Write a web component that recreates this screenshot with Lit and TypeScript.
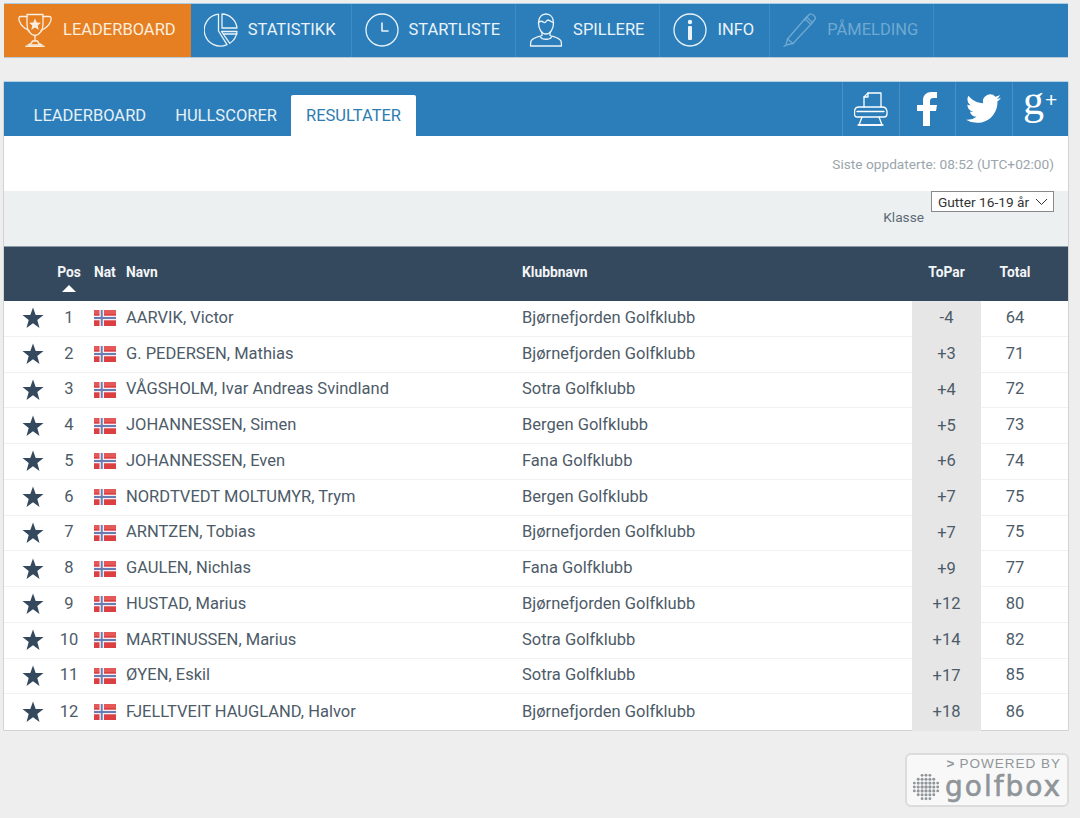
import { LitElement, html, css, svg } from "lit";
import { customElement } from "lit/decorators.js";

const ROWS: [number, string, string, string, number][] = [
  [1, "AARVIK, Victor", "Bjørnefjorden Golfklubb", "-4", 64],
  [2, "G. PEDERSEN, Mathias", "Bjørnefjorden Golfklubb", "+3", 71],
  [3, "VÅGSHOLM, Ivar Andreas Svindland", "Sotra Golfklubb", "+4", 72],
  [4, "JOHANNESSEN, Simen", "Bergen Golfklubb", "+5", 73],
  [5, "JOHANNESSEN, Even", "Fana Golfklubb", "+6", 74],
  [6, "NORDTVEDT MOLTUMYR, Trym", "Bergen Golfklubb", "+7", 75],
  [7, "ARNTZEN, Tobias", "Bjørnefjorden Golfklubb", "+7", 75],
  [8, "GAULEN, Nichlas", "Fana Golfklubb", "+9", 77],
  [9, "HUSTAD, Marius", "Bjørnefjorden Golfklubb", "+12", 80],
  [10, "MARTINUSSEN, Marius", "Sotra Golfklubb", "+14", 82],
  [11, "ØYEN, Eskil", "Sotra Golfklubb", "+17", 85],
  [12, "FJELLTVEIT HAUGLAND, Halvor", "Bjørnefjorden Golfklubb", "+18", 86],
];

const stroke = (body: unknown, w = 34, h = 34) => html`<svg class="ic" width=${w} height=${h} viewBox="0 0 ${w} ${h}" fill="none" stroke="currentColor" stroke-width="1.3" stroke-linejoin="round" stroke-linecap="round">${body}</svg>`;

const trophy = stroke(svg`
  <path d="M9 1.500H25V11C25 18 21.500 21.500 17 22.500C12.500 21.500 9 18 9 11Z"/>
  <path d="M9 3.500H2.500C0.500 3.500 0.500 6 1.500 8.500C3 12.500 6.500 15.500 11 17.500"/>
  <path d="M25 3.500H31.500C33.500 3.500 33.500 6 32.500 8.500C31 12.500 27.500 15.500 23 17.500"/>
  <path d="M17 22.500V28M14.500 28H19.500C20 30 22 31.500 24 32H10C12 31.500 14 30 14.500 28Z"/>
  <path d="M8 33.200H26" stroke-width="1.600"/>
  <path fill="currentColor" stroke="none" d="M17 5.500L18.700 9.400L22.900 9.800L19.700 12.600L20.700 16.700L17 14.500L13.300 16.700L14.300 12.600L11.100 9.800L15.300 9.400Z"/>
`);
const pie = stroke(svg`
  <path d="M14.500 1.200A16 16 0 1 0 23 31.600L14.500 18Z"/>
  <path d="M18 1A15.500 15.500 0 0 1 33 15H18Z"/>
  <path d="M17.500 18.500H33A16 16 0 0 1 25.800 30.300Z"/>
  <path d="M19.500 21L33 21"/>
`);
const clock = stroke(svg`<circle cx="17" cy="17" r="16"/><path d="M17 10V18H23" stroke-width="1.600"/>`);
const person = stroke(svg`
  <path d="M9.500 10C9.500 4.500 12.500 1 17 1C21.500 1 24.500 4.500 24.500 10C24.500 15.500 21.500 21 17 21C12.500 21 9.500 15.500 9.500 10Z"/>
  <path d="M9.500 10C11 7.500 13 8 15 9.500C16.500 10.500 17.500 7 19 7C21 7.500 23 9 24.500 10"/>
  <path d="M13 19.500V22.500C9 24 3 25 1.800 28.500L1.500 33H32.500L32.200 28.500C31 25 25 24 21 22.500V19.500"/>
  <path d="M11.500 24C13 27 21 27 22.500 24"/>
`);
const info = html`<svg class="ic" width="34" height="34" viewBox="0 0 34 34" fill="none" stroke="currentColor"><circle cx="17" cy="17" r="16" stroke-width="1.300"/><circle cx="17" cy="9" r="2.200" fill="currentColor" stroke="none"/><rect x="15" y="13" width="4" height="14" rx="1" fill="currentColor" stroke="none"/></svg>`;
const pen = stroke(svg`
  <path d="M2 32.500L1 33.500M3 32L4.500 26L23.500 4L29.500 9.500L10 30.500Z"/>
  <path d="M4.500 26L10 30.500M22 6L28 11.500M24 3.500L27 1C29 0.500 32.500 3.500 32.500 5.500L29.500 9.500M26 1.800L21 7.500"/>
`);
const printer = stroke(svg`
  <path d="M10 15V5L14 1H27V15"/><path d="M10 5H14V1"/>
  <path d="M5 15H28C31 15 33 17 33 20V22C33 24 31.500 25 30 25H3C1.500 25 0.500 24 0.500 22V20C0.500 17 2 15 5 15Z"/>
  <path d="M3 19.500H30"/><path d="M8 25L5 33H28L25 25"/><path d="M4 33H29"/>
`, 34, 34);
const fb = html`<svg class="ic" width="20" height="34" viewBox="0 0 20 34" fill="currentColor"><path d="M6 34V19H0V13H6V8.500C6 3 9.500 0 14.500 0H20V6H16.500C14 6 13 7 13 9V13H20L19 19H13V34Z"/></svg>`;
const tw = html`<svg class="ic" width="35" height="30" viewBox="0 0 24 20.500" fill="currentColor"><path d="M23.953 2.570a10 10 0 01-2.825.775 4.958 4.958 0 002.163-2.723c-.951.555-2.005.959-3.127 1.184a4.920 4.920 0 00-8.384 4.482C7.690 6.095 4.067 4.130 1.640 1.162a4.822 4.822 0 00-.666 2.475c0 1.710.870 3.213 2.188 4.096a4.904 4.904 0 01-2.228-.616v.060a4.923 4.923 0 003.946 4.827 4.996 4.996 0 01-2.212.085 4.936 4.936 0 004.604 3.417 9.867 9.867 0 01-6.102 2.105c-.390 0-.779-.023-1.170-.067a13.995 13.995 0 007.557 2.209c9.053 0 13.998-7.496 13.998-13.985 0-.210 0-.420-.015-.630A9.935 9.935 0 0024 2.590z"/></svg>`;

const star = html`<svg class="star" width="22" height="22" viewBox="0 0 22 22" fill="currentColor"><path d="M11 0.500L13.700 8H21.500L15.300 12.900L17.500 21L11 16.300L4.500 21L6.700 12.900L0.500 8H8.300Z"/></svg>`;
const flag = html`<svg class="flag" width="22" height="16" viewBox="0 0 22 16"><rect width="22" height="16" fill="#dc3f42"/><rect y="0" width="22" height="4" fill="#ea6a68" opacity=".6"/><rect x="5.500" width="4.500" height="16" fill="#f0eff4"/><rect y="5.700" width="22" height="4.600" fill="#f0eff4"/><rect x="6.800" width="1.900" height="16" fill="#6a7cb2"/><rect y="7" width="22" height="2" fill="#6a7cb2"/></svg>`;

const dots: { x: number; y: number; r: number }[] = [];
for (let i = -3; i <= 3; i++) for (let j = -3; j <= 3; j++) {
  const d = Math.hypot(i, j);
  if (d <= 3.5) dots.push({ x: 14 + i * 3.9, y: 14 + j * 3.9, r: 1.8 - d * 0.12 });
}
const globe = html`<svg class="globe" width="28" height="28" viewBox="0 0 28 28" fill="#8f9599">${dots.map((d) => svg`<circle cx=${d.x} cy=${d.y} r=${d.r}/>`)}</svg>`;

const NAV = [
  { t: "LEADERBOARD", i: trophy, c: "first" },
  { t: "STATISTIKK", i: pie, c: "" },
  { t: "STARTLISTE", i: clock, c: "" },
  { t: "SPILLERE", i: person, c: "" },
  { t: "INFO", i: info, c: "" },
  { t: "PÅMELDING", i: pen, c: "off" },
];

@customElement("app-root")
export class AppRoot extends LitElement {
  static styles = css`
    :host { display: block; min-height: 818px; background: #eeeeee; font-family: Roboto, "Liberation Sans", sans-serif; color: #4d5b68; box-sizing: border-box; padding: 3px 12px 0 4px; overflow: hidden; }
    * { box-sizing: border-box; }
    .ic { display: block; flex: none; }
    nav { display: flex; height: 55px; background: #2b7eb9; border-top: 1px solid #a9cde4; border-bottom: 1px solid #b7c9d6; }
    .item { display: flex; align-items: center; gap: 10px; padding: 0 15px 2px 13px; color: #eaf3f9; font-size: 16.500px; border-right: 1px solid #3f8cc3; }
    .item.first { background: #e67e22; color: #fbeedd; padding: 0 15px 2px 14px; gap: 11px; border-right: none; }
    .item.off { color: #6fa9d2; }
    .card { margin: 23px -1px 0 -1px; background: #fff; border: 1px solid #d0d3d5; border-top: none; border-radius: 2px; }
    .bar { display: flex; justify-content: space-between; height: 55px; background: #2b7eb9; border-top: 1px solid #b3cfe2; padding-left: 15px; }
    .tabs { display: flex; align-items: flex-end; }
    .tab { height: 41px; padding: 0 14.500px; display: flex; align-items: center; font-size: 16.500px; color: #e6f0f7; border-radius: 2px 2px 0 0; }
    .tab.on { background: #fff; color: #2e7cb2; }
    .tools { display: flex; }
    .tool { width: 56.500px; display: flex; align-items: center; justify-content: center; color: #fff; border-left: 1px solid #4a92c5; }
    .gplus { font-family: "Liberation Serif", serif; font-size: 42px; line-height: 38px; display: flex; align-items: flex-start; height: 38px; margin-top: -19px; }
    .gplus sup { font-size: 21px; line-height: 1; font-family: "Liberation Sans", sans-serif; font-weight: 400; margin: 8px 0 0 1px; }
    .updated { height: 55px; display: flex; align-items: center; justify-content: flex-end; padding-right: 14px; font-size: 13.700px; color: #9ba5ab; }
    .filter { height: 55px; background: #ecf0f1; display: flex; justify-content: flex-end; gap: 7px; padding-right: 14px; font-size: 13.700px; }
    .klasse { margin-top: 18px; line-height: 16px; color: #5c6a76; }
    .sel { position: relative; height: 21px; width: 123px; }
    select { appearance: none; width: 100%; height: 100%; border: 1px solid #8a8a8a; background: #fff; font: 13.700px Roboto, sans-serif; color: #333; padding: 0 0 0 6px; border-radius: 0; }
    .chev { position: absolute; right: 6px; top: 7px; pointer-events: none; }
    .grid { display: grid; grid-template-columns: 44px 42px 36px 396px 390px 69px 68px 1fr; align-items: stretch; }
    .head { height: 55px; background: #34495e; color: #f3f5f7; font-size: 13.800px; font-weight: 700; border-top: 1px solid #8d9aa7; }
    .head > div { padding-top: 17px; line-height: 16px; }
    .c { text-align: center; }
    .arrow { display: block; margin: 5px auto 0; }
    .nat { padding-left: 4px; }
    .row { height: 35.750px; font-size: 16.500px; border-bottom: 1px solid #f1f1f1; }
    .row:last-child { border-bottom: none; }
    .row > div { display: flex; align-items: center; padding-bottom: 2px; min-width: 0; white-space: nowrap; }
    .row > .cc { justify-content: center; }
    .row > .s { padding: 0 0 0 18px; color: #34495e; }
    .row > .f { padding: 0 0 0 4px; }
    .row > .par { background: #e6e6e6; margin-bottom: -1px; }
    .star, .flag { display: block; }
    .logo-wrap { display: flex; justify-content: flex-end; margin: 22px -1px 0 0; }
    .logo { width: 164px; height: 54px; background: #f8f8f8; border: 2px solid #dcdcdc; border-radius: 6px; padding: 1px 6px 0 5px; color: #8f9599; }
    .pw { text-align: right; font: 13.500px/16px "Liberation Sans", sans-serif; letter-spacing: 1px; }
    .pw b { font-weight: 700; margin-right: 4px; }
    .gb { display: flex; align-items: center; gap: 5px; margin-top: 1px; }
    .gb span { font: 400 28px/28px "DejaVu Sans", sans-serif; letter-spacing: 2px; color: #8f9599; -webkit-text-stroke: .6px #8f9599; white-space: nowrap; }
    .globe { flex: none; }
  `;

  render() {
    return html`
      <nav>
        ${NAV.map((n) => html`<div class="item ${n.c}">${n.i}<span>${n.t}</span></div>`)}
      </nav>
      <div class="card">
        <div class="bar">
          <div class="tabs">
            <div class="tab">LEADERBOARD</div>
            <div class="tab">HULLSCORER</div>
            <div class="tab on">RESULTATER</div>
          </div>
          <div class="tools">
            <div class="tool">${printer}</div>
            <div class="tool">${fb}</div>
            <div class="tool">${tw}</div>
            <div class="tool"><span class="gplus">g<sup>+</sup></span></div>
          </div>
        </div>
        <div class="updated">Siste oppdaterte: 08:52 (UTC+02:00)</div>
        <div class="filter">
          <span class="klasse">Klasse</span>
          <div class="sel">
            <select><option>Gutter 16-19 år</option></select>
            <svg class="chev" width="13" height="8" viewBox="0 0 13 8" fill="none" stroke="#333" stroke-width="1"><path d="M1 1L6.500 6.500L12 1"/></svg>
          </div>
        </div>
        <div class="grid head">
          <div></div>
          <div class="c">Pos<svg class="arrow" width="14" height="7" viewBox="0 0 14 7" fill="#fff"><path d="M7 0L14 7H0Z"/></svg></div>
          <div class="nat">Nat</div>
          <div>Navn</div>
          <div>Klubbnavn</div>
          <div class="c">ToPar</div>
          <div class="c">Total</div>
          <div></div>
        </div>
        ${ROWS.map((r) => html`
          <div class="grid row">
            <div class="s">${star}</div>
            <div class="cc">${r[0]}</div>
            <div class="f">${flag}</div>
            <div>${r[1]}</div>
            <div>${r[2]}</div>
            <div class="cc par">${r[3]}</div>
            <div class="cc">${r[4]}</div>
            <div></div>
          </div>`)}
      </div>
      <div class="logo-wrap">
        <div class="logo">
          <div class="pw"><b>&gt;</b>POWERED BY</div>
          <div class="gb">${globe}<span>golfbox</span></div>
        </div>
      </div>
    `;
  }
}
